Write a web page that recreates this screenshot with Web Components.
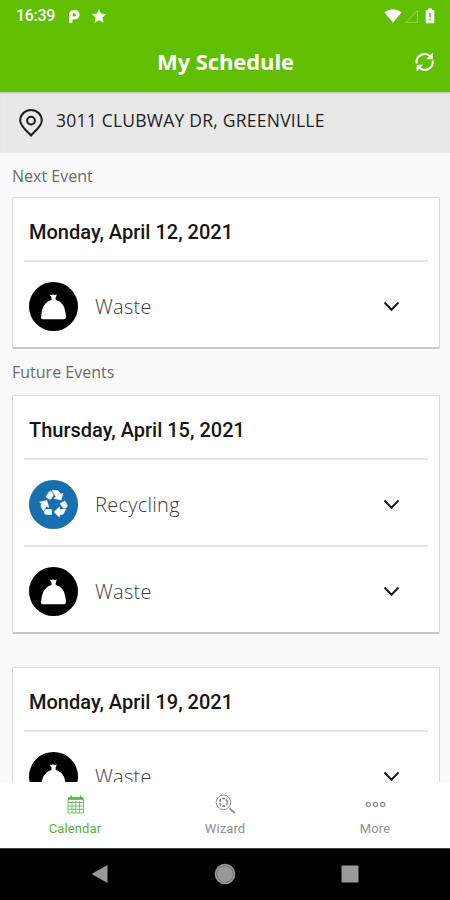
<!DOCTYPE html>
<html lang="en"><head><meta charset="utf-8"><title>My Schedule</title>
<style>
html,body{margin:0;height:900px;overflow:hidden;background:#fafafa}
</style></head><body>
<schedule-app></schedule-app>
<script>
const define=(name,html)=>customElements.define(name,class extends HTMLElement{
  constructor(){super();this.attachShadow({mode:'open'}).innerHTML=typeof html==='function'?html(this):html}
});

define('status-bar',`<style>
:host{display:flex;height:32px;align-items:center;padding:0 14px 0 16px;color:#fff;font:500 16px/32px Roboto,sans-serif}
span{letter-spacing:-.3px;width:52px}svg{display:block}.gap{flex:1}
</style><span>16:39</span>
<svg width="12" height="15" viewBox="0 0 12 15"><path fill="#fff" fill-rule="evenodd" d="M1 7V5.500Q1.200 1 6.200 1Q11.600 1.200 11.600 5.800Q11.500 10.300 6.500 10.500H4.500V13.500Q2.800 14.600 1 13.800V8.500zM4.600 5.600V7.600H6.200Q8 7.500 8 5.800Q8 4.200 6.200 4.200Q4.600 4.200 4.600 5.600z"/></svg>
<svg width="14" height="14" viewBox="0 0 14 14" style="margin-left:12px"><path fill="#fff" stroke="#fff" stroke-width=".5" d="M7 .5l2 4.400 4.700.5-3.600 3.200 1.100 4.700L7 10.900l-4.200 2.400 1.100-4.700L.3 5.400l4.700-.5z"/></svg>
<i class="gap"></i>
<svg width="18" height="14" viewBox="0 0 18 14"><path fill="#fff" d="M.3 3.200Q9-2.500 17.700 3.200L9 13.800z"/></svg>
<svg width="15" height="15" viewBox="0 0 15 15" style="margin-left:2px"><path fill="none" stroke="#8fd255" stroke-width="1" d="M1.500 13.500L13.500 1.500V13.500z"/></svg>
<svg width="10" height="16" viewBox="0 0 10 16" style="margin:0 1px 0 6px"><path fill="#fff" d="M3 .5h4v1.500h1.500q.8 0 .8.8v11.700q0 .8-.8.8h-7q-.8 0-.8-.8v-11.700q0-.8.8-.8H3z"/><path fill="#5fbf00" d="M4.200 5h1.600v4.500H4.200zM4.200 10.700h1.600v1.600H4.200z"/></svg>`);

define('title-bar',`<style>
:host{display:grid;grid-template-columns:50px 1fr 50px;height:60px;align-items:center;color:#fff;font:700 22px/58px "Open Sans",sans-serif}
h1{font:inherit;margin:0;height:60px;text-align:center;letter-spacing:-.1px;padding-left:1px}svg{display:block;justify-self:center}
</style><i></i><h1>My Schedule</h1>
<svg width="22" height="22" viewBox="0 0 22 22"><g fill="none" stroke="#fff" stroke-width="2.100"><path d="M2.700 12.500A8 8 0 0 1 16.500 5.800"/><path d="M18.700 9.500A8 8 0 0 1 4.900 16.200"/></g><path fill="#fff" d="M18.800 1.600V8.200H12.200zM2.600 20.400V13.800H9.200z"/></svg>`);

define('address-bar',`<style>
:host{display:flex;height:61px;box-sizing:border-box;align-items:center;padding:0 19px 3px;gap:13px;background:#e8e8e8;color:#1d1d1d;box-shadow:inset 0 2px 2px -1px #b5bda9;font:400 17.500px/56px "Open Sans",sans-serif;letter-spacing:.23px}
svg{display:block;margin-top:3px}span{height:58px}
</style><svg width="24" height="28" viewBox="0 0 24 28"><g fill="none" stroke="#1d1d1d" stroke-width="2"><path d="M12 26.500C9 23 1.200 17.500 1.200 11.500a10.800 10.500 0 0 1 21.600 0C22.800 17.500 15 23 12 26.500z"/><circle cx="12" cy="11.600" r="3.900"/></g></svg><span><slot></slot></span>`);

define('section-label',`<style>:host{display:block;height:46px;box-sizing:border-box;padding:1px 12px 0;color:#6b6b6b;font:400 16px/44px "Open Sans",sans-serif}
:host([first]){height:44px}</style><slot></slot>`);

define('event-card',`<style>
:host{display:block;margin:0 10px 0 12px;box-sizing:border-box;border:1px solid #dcdcdc;border-bottom:2px solid #c8c8c8;border-radius:2px;background:#fff}
h2{margin:0;padding:5px 16px 0;height:57px;color:#161616;font:500 20px/58px Roboto,sans-serif}
</style><h2><slot name="date"></slot></h2><slot></slot>`);

const icons={
waste:`<circle cx="24.500" cy="24.500" r="24.500" fill="#000"/><path fill="#fff" d="M20.700 12.500q1.600.8 3.300-.1q1.800.9 3.800.1l-1.100 3.200v2.300q5.900 1.500 8.300 6.800q1.600 5 2 9.800q0 3-2.500 2.700h-20.500q-2.500 0-1.900-2.700q.2-5.400 2.200-9.800q2.600-5.300 8.200-6.800v-2.300z"/>`,
recycling:`<circle cx="24.500" cy="24.500" r="24.500" fill="#176fae"/><path fill="#fff" stroke="#fff" stroke-width=".5" transform="translate(9.400 7.900) scale(1.310 1.270)" d="M5.770 7.150 7.200 4.780l1.030-1.710c.39-.65 1.330-.65 1.720 0l1.480 2.460-1.230 2.060-1 1.620-3.430-2.060zm15.950 5.820-1.600-2.660-3.460 2L18.870 16H20c.76 0 1.450-.43 1.790-1.110.14-.28.21-.58.21-.89 0-.36-.1-.71-.28-1.030zM16 21h1.500c.76 0 1.450-.43 1.790-1.110L20.740 17H16v-2l-4 4 4 4v-2zm-6-4H5.700l-.84 1.410c-.3.5-.32 1.120-.06 1.650.28.57.87.94 1.520.94H10v-4zm-3.880-2.650 1.730 1.040L6.480 9.900 1 11.270l1.700 1.020-.41.69c-.35.59-.38 1.310-.07 1.920l1.630 3.260 2.270-3.810zm10.900-9.210-1.300-2.170C15.350 2.370 14.700 2 14 2h-3.530l3.120 5.200-1.720 1.030 5.490 1.370 1.370-5.490-1.710 1.030z"/>`};
define('event-row',el=>`<style>
:host{display:block;padding:0 11px}
div{display:flex;align-items:center;padding:4px 28px 0 5px;border-top:2px solid #e6e6e6;height:81px;color:#3c3c3c;font:300 20px/40px "Open Sans",sans-serif;letter-spacing:.28px}
span{flex:1;margin-left:17px}svg{display:block}
</style><div><svg width="49" height="49" viewBox="0 0 49 49">${icons[el.getAttribute('type')]}</svg><span><slot></slot></span><svg width="17" height="11" viewBox="0 0 17 11"><path fill="none" stroke="#1c1c1c" stroke-width="2" d="M1.500 1.500L8.500 8.700L15.500 1.500"/></svg></div>`);

const tabIcons={
calendar:`<g fill="none" stroke="currentColor"><path d="M3 5v14h15.500v-14M3 8.500h15.500M3 12h15.500M3 15.300h15.500M7 7v12M10.800 7v12M14.600 7v12" stroke-width=".8"/><path d="M3 4.500h15.500" stroke-width="2.600"/><path d="M6 1.500v3M15.500 1.500v3" stroke-width="1.500"/></g>`,
wizard:`<g fill="none" stroke="currentColor"><circle cx="8.500" cy="8.300" r="7.300" stroke-width="1"/><circle cx="8.500" cy="8.300" r="3.900" stroke-width="1.700" stroke-dasharray="3.100 .984"/><path d="M14.800 14.700l5 4.300" stroke-width="2"/><path d="M13.600 13.500l2 2" stroke-width=".7"/></g>`,
more:`<g fill="none" stroke="currentColor" stroke-width="1.300"><circle cx="3.300" cy="10.500" r="2.100"/><circle cx="10.500" cy="10.500" r="2.100"/><circle cx="17.700" cy="10.500" r="2.100"/></g>`};
define('tab-item',el=>`<style>
:host{display:flex;flex:1;flex-direction:column;align-items:center;padding-top:12px;color:#8f8f8f;font:400 13px/16px Roboto,sans-serif;letter-spacing:.1px}
:host([active]){color:#4fb53a}svg{display:block;margin-bottom:6px}
</style><svg width="21" height="21" viewBox="0 0 21 21">${tabIcons[el.getAttribute('icon')]}</svg><slot></slot>`);
define('tab-bar',`<style>:host{display:flex;height:66px;background:#fff}</style><slot></slot>`);

define('system-nav',`<style>
:host{display:grid;grid-template-columns:repeat(3,125px);justify-content:center;align-items:center;justify-items:center;height:52px;box-sizing:border-box;background:#000;border-top:1px solid #444}
svg{display:block;margin-top:-2px}</style>
<svg width="24" height="24" viewBox="0 0 24 24"><path fill="#999" d="M3.500 12L19.500 3v18z"/></svg>
<svg width="24" height="24" viewBox="0 0 24 24"><circle cx="12" cy="12" r="10.300" fill="#999"/><circle cx="12" cy="12" r="8.300" fill="none" stroke="#666" stroke-width=".8"/></svg>
<svg width="24" height="24" viewBox="0 0 24 24"><rect x="3.500" y="3.500" width="17" height="17" rx="1" fill="#999"/></svg>`);

define('schedule-app',`<style>
:host{display:flex;flex-direction:column;width:450px;height:900px;background:#fafafa}
header{background:#5fbf00;flex:none}
main{flex:1;min-height:0;overflow:hidden}
.later{margin-top:33px}
address-bar,tab-bar,system-nav{flex:none}
</style>
<header><status-bar></status-bar><title-bar></title-bar></header>
<address-bar>3011 CLUBWAY DR, GREENVILLE</address-bar>
<main>
<section-label first>Next Event</section-label>
<event-card><span slot="date">Monday, April 12, 2021</span><event-row type="waste">Waste</event-row></event-card>
<section-label>Future Events</section-label>
<event-card><span slot="date">Thursday, April 15, 2021</span><event-row type="recycling">Recycling</event-row><event-row type="waste">Waste</event-row></event-card>
<event-card class="later"><span slot="date">Monday, April 19, 2021</span><event-row type="waste">Waste</event-row></event-card>
</main>
<tab-bar><tab-item icon="calendar" active>Calendar</tab-item><tab-item icon="wizard">Wizard</tab-item><tab-item icon="more">More</tab-item></tab-bar>
<system-nav></system-nav>`);
</script></body></html>
